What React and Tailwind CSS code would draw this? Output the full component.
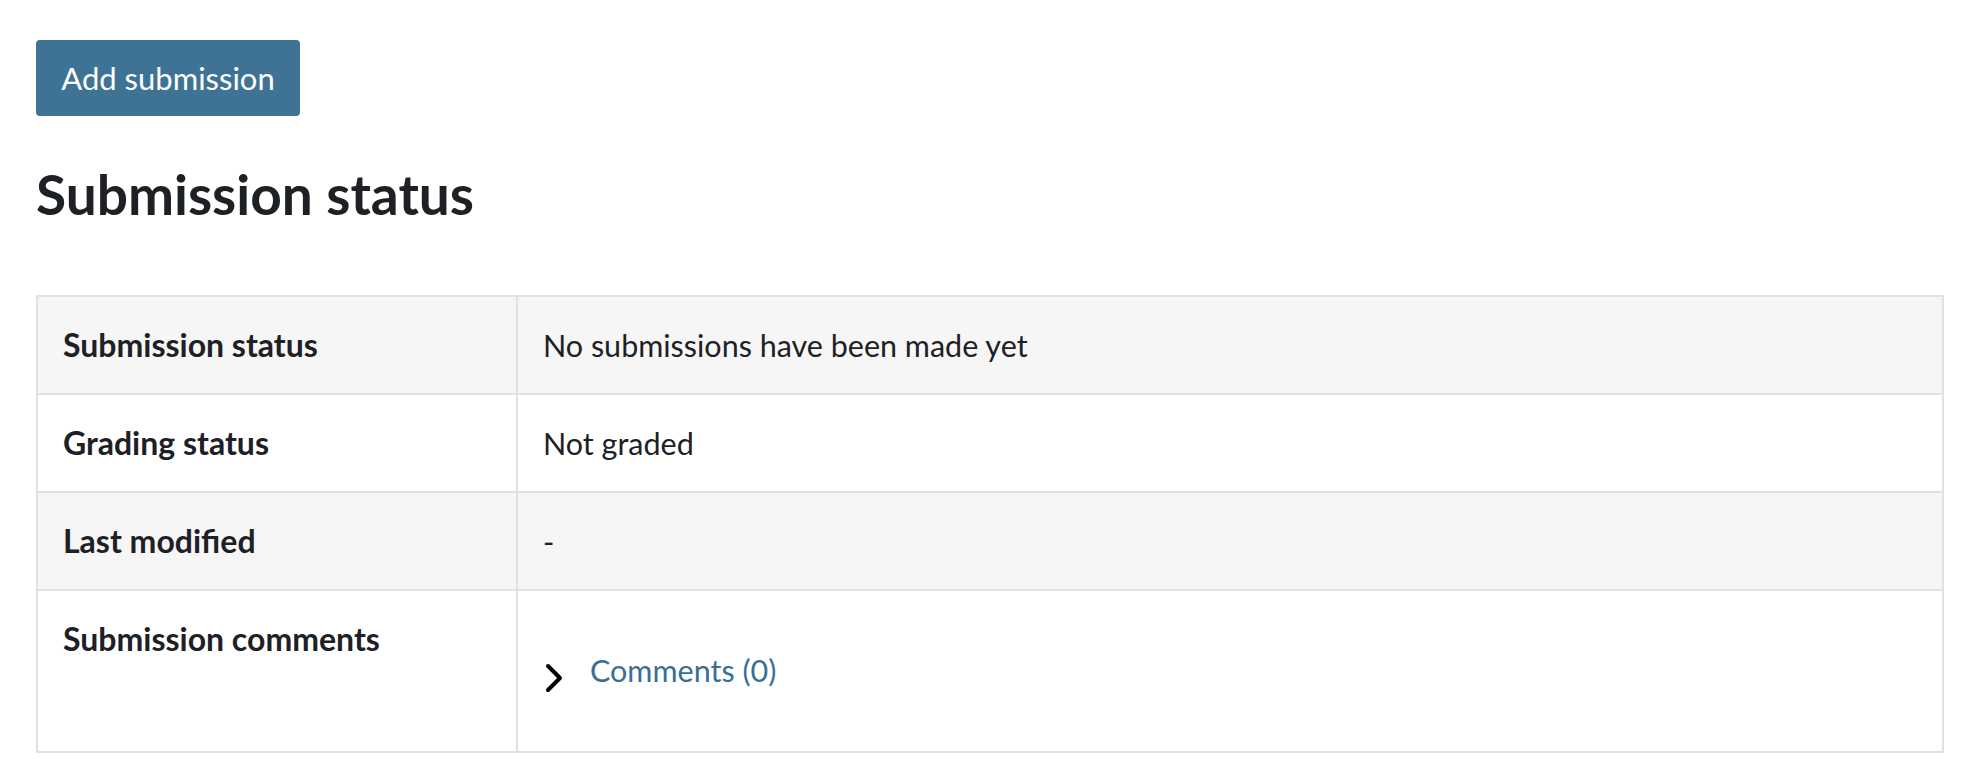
const rows = [
  { label: "Submission status", value: "No submissions have been made yet" },
  { label: "Grading status", value: "Not graded" },
  { label: "Last modified", value: "-" },
];

function Chevron() {
  return (
    <svg width="18" height="30" viewBox="0 0 18 30" className="mt-[16px] shrink-0">
      <polyline points="3,3 15,15 3,27" fill="none" stroke="#000" strokeWidth="4" strokeLinecap="round" strokeLinejoin="round" />
    </svg>
  );
}

export default function App() {
  return (
    <div className="min-h-screen bg-white pl-[36px] pr-[30px] pt-[40px] text-[#1d2125]" style={{ fontFamily: "Lato, 'Liberation Sans', sans-serif" }}>
      <button className="inline-flex h-[76px] w-[264px] items-center justify-center rounded-[4px] bg-[#3e7395] text-[31px] text-white">
        Add submission
      </button>

      <h2 className="mt-[45px] text-[55px] font-bold leading-[1.2]">Submission status</h2>

      <table className="mt-[68px] w-full border-collapse border-2 border-[#dee2e6] text-[30.5px] leading-[48px]">
        <tbody>
          {rows.map((r, i) => (
            <tr key={r.label} className={i % 2 === 0 ? "bg-[#f6f6f6]" : "bg-white"}>
              <th className="w-[480px] border-2 border-[#dee2e6] px-[25px] py-[24px] text-left align-top text-[32px] font-bold">
                {r.label}
              </th>
              <td className="border-2 border-[#dee2e6] px-[25px] py-[24px] align-top">{r.value}</td>
            </tr>
          ))}
          <tr className="bg-white">
            <th className="border-2 border-[#dee2e6] px-[25px] py-[24px] text-left align-top text-[32px] font-bold">
              Submission comments
            </th>
            <td className="border-2 border-[#dee2e6] px-[25px] py-[24px] align-top">
              <div className="mb-[33px] ml-[2px] mt-[31px] flex items-center gap-[27px]">
                <Chevron />
                <a href="#" className="text-[#3a6f93]">Comments (0)</a>
              </div>
            </td>
          </tr>
        </tbody>
      </table>
    </div>
  );
}
